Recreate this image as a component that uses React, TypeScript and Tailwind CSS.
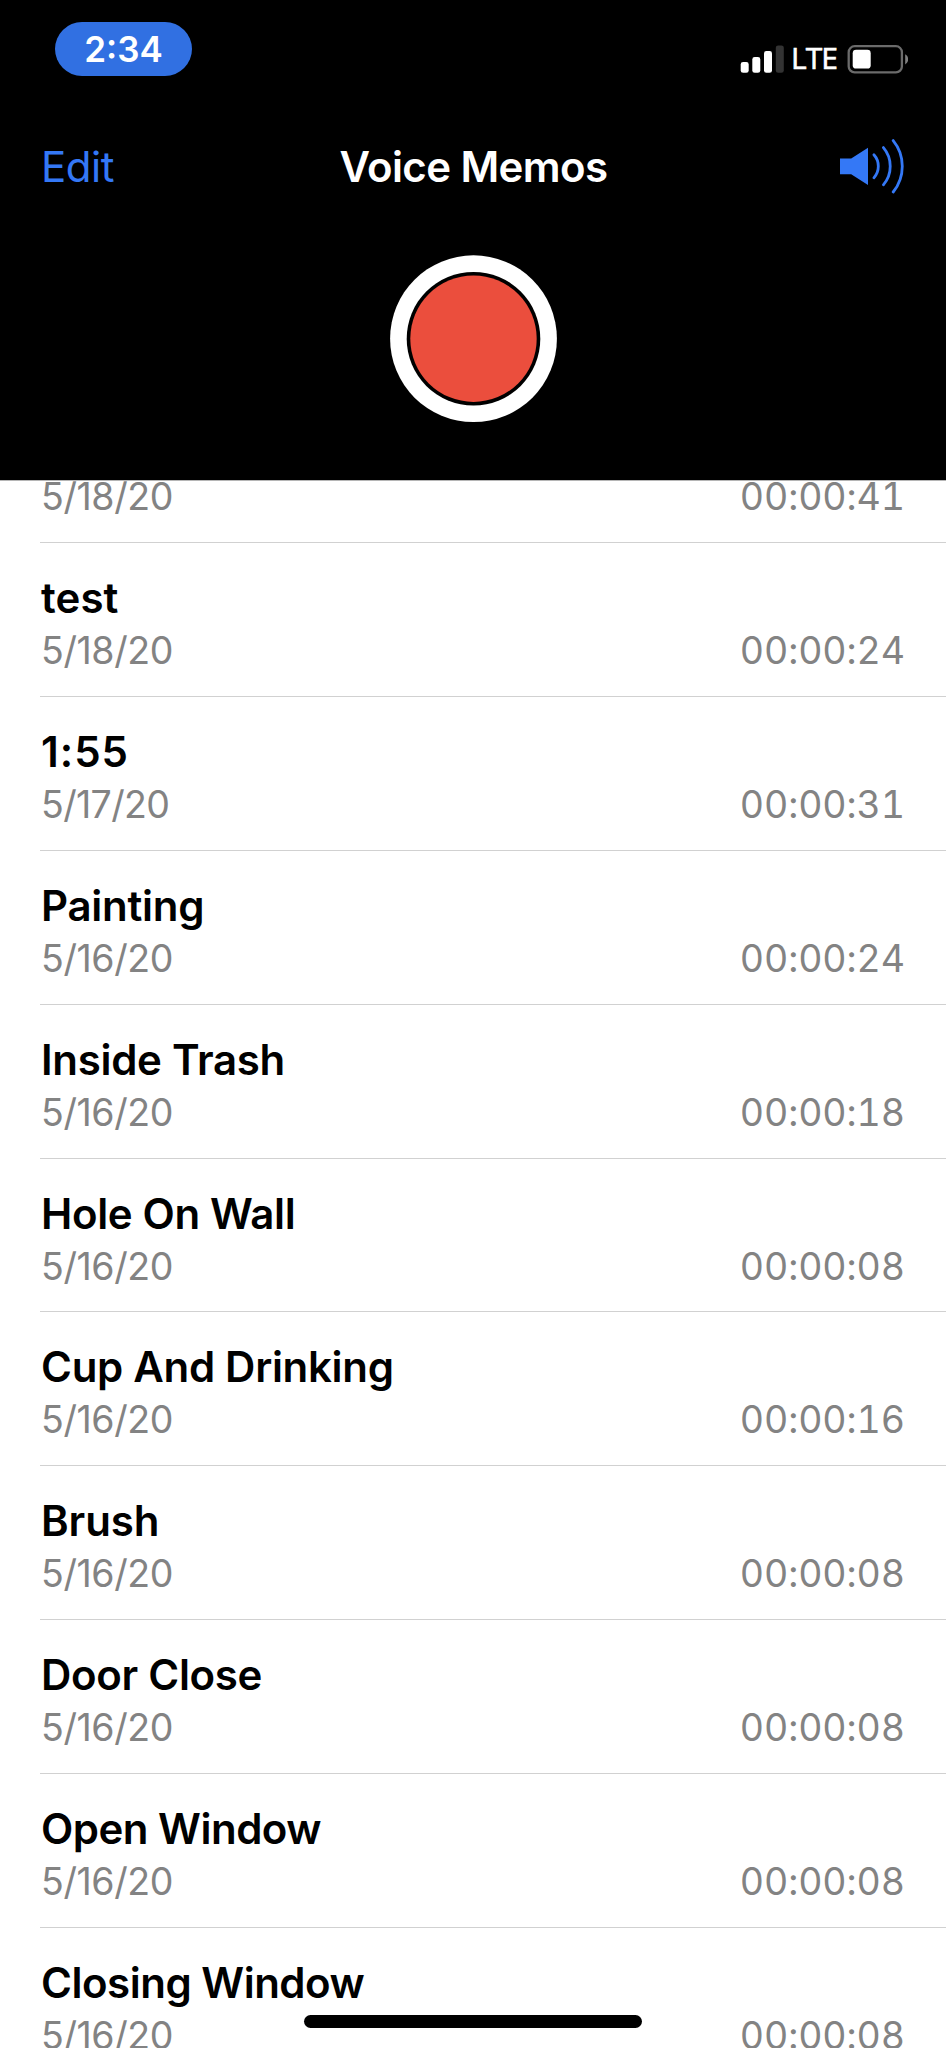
import React from 'react';

interface Memo {
  title?: string;
  date: string;
  length: string;
  tracking?: string;
}

const memos: Memo[] = [
  { date: '5/18/20', length: '00:00:41' },
  { title: 'test', date: '5/18/20', length: '00:00:24', tracking: 'tracking-[0.1px]' },
  { title: '1:55', date: '5/17/20', length: '00:00:31', tracking: 'tracking-[1px]' },
  { title: 'Painting', date: '5/16/20', length: '00:00:24', tracking: 'tracking-[-0.25px]' },
  { title: 'Inside Trash', date: '5/16/20', length: '00:00:18', tracking: 'tracking-[-0.3px]' },
  { title: 'Hole On Wall', date: '5/16/20', length: '00:00:08', tracking: 'tracking-[-0.35px]' },
  { title: 'Cup And Drinking', date: '5/16/20', length: '00:00:16', tracking: 'tracking-[-0.3px]' },
  { title: 'Brush', date: '5/16/20', length: '00:00:08', tracking: 'tracking-[-0.1px]' },
  { title: 'Door Close', date: '5/16/20', length: '00:00:08', tracking: 'tracking-[-0.3px]' },
  { title: 'Open Window', date: '5/16/20', length: '00:00:08', tracking: 'tracking-[-0.5px]' },
  { title: 'Closing Window', date: '5/16/20', length: '00:00:08', tracking: 'tracking-[-0.48px]' },
];

const SignalIcon = () => (
  <svg width="44" height="28" viewBox="0 0 44 28" fill="#fff">
    <rect x="0.7" y="17" width="8" height="10.8" rx="2.4" />
    <rect x="12.3" y="12" width="8" height="15.8" rx="2.4" />
    <rect x="24" y="6" width="8" height="21.8" rx="2.4" />
    <rect x="35.8" y="0.4" width="8" height="27.4" rx="2.4" fill="#333" />
  </svg>
);

const BatteryIcon = () => (
  <svg width="62" height="29" viewBox="0 0 62 29">
    <rect x="2.7" y="1.2" width="53.2" height="26.2" rx="6" fill="none" stroke="#6b6b6b" strokeWidth="2.3" />
    <rect x="6.7" y="4.8" width="18" height="18.8" rx="3.4" fill="#fff" />
    <path d="M59.2 9.2 C63.2 11.2 63.2 17.4 59.2 19.4 Z" fill="#808080" />
  </svg>
);

const SpeakerIcon = () => (
  <svg width="66" height="56" viewBox="0 0 66 56">
    <path d="M0 19.5 H11.2 L28 8.8 V46 L11.2 35.3 H0 Z" fill="#3478f6" />
    <g fill="none" stroke="#3478f6" strokeWidth="2.8" strokeLinecap="round">
      <path d="M33.9 15.8 C39.8 22.4 39.8 32 33.9 38.8" />
      <path d="M43.4 8.6 C52.5 19.3 52.5 35 43.4 45.8" />
      <path d="M53.2 1.6 C65.3 16.4 65.3 38 53.2 53" />
    </g>
  </svg>
);

const RecordIcon = () => (
  <svg width="168" height="168" viewBox="0 0 168 168">
    <circle cx="84.5" cy="83.7" r="83.4" fill="#fff" />
    <circle cx="84.5" cy="83.7" r="66.8" fill="#000" />
    <circle cx="84.5" cy="83.7" r="63.2" fill="#eb4e3d" />
  </svg>
);

const MemoRow: React.FC<{ memo: Memo }> = ({ memo }) => (
  <li className="ml-[40px] h-[153.88px] border-b border-[#d1d1d1] pt-[30px] pr-[41px] pl-px">
    <div className={`h-[50px] text-[42px] leading-[50px] font-semibold ${memo.tracking ?? ''}`}>{memo.title}</div>
    <div className="flex justify-between text-[37.5px] leading-[55px] text-[#838383]">
      <span className={memo.date === '5/17/20' ? 'tracking-[-0.65px]' : 'tracking-[-0.4px]'}>{memo.date}</span>
      <span className="tracking-[-0.1px] tabular-nums">{memo.length}</span>
    </div>
  </li>
);

const App: React.FC = () => {
  return (
    <div className="relative flex h-[2048px] w-[946px] flex-col overflow-hidden bg-white font-['Inter',sans-serif] text-black">
      <header className="h-[480px] shrink-0 bg-black text-white">
        {/* Status bar */}
        <div className="flex h-[120px] items-start justify-between pt-[22px] pr-[38px] pl-[55px]">
          <div className="flex h-[54px] w-[137px] items-center justify-center rounded-full bg-[#3170e2] text-[35px] font-semibold">
            2:34
          </div>
          <div className="mt-[22px] flex items-center">
            <SignalIcon />
            <span className="w-[62px] pb-[2px] pl-[7px] font-['Open_Sans',sans-serif] text-[30px] leading-[28px] font-medium tracking-[-1px] [-webkit-text-stroke:0.6px_white]">
              LTE
            </span>
            <BatteryIcon />
          </div>
        </div>

        {/* Title bar */}
        <div className="grid h-[94px] grid-cols-3 items-center pr-[40px] pl-[41px]">
          <button className="text-left text-[42px] leading-[50px] tracking-[-0.5px] text-[#3478f6]">Edit</button>
          <h1 className="text-center text-[42px] leading-[50px] font-semibold tracking-[-0.6px] whitespace-nowrap">
            Voice Memos
          </h1>
          <button className="flex justify-end">
            <SpeakerIcon />
          </button>
        </div>

        {/* Record button */}
        <div className="flex justify-center pt-[41px]">
          <button>
            <RecordIcon />
          </button>
        </div>
      </header>

      <main className="flex-1 overflow-hidden border-t border-[#b5b5b5]">
        <ul className="-mt-[91.8px]">
          {memos.map((memo, index) => (
            <MemoRow key={index} memo={memo} />
          ))}
        </ul>
      </main>

      {/* Home indicator */}
      <div className="absolute bottom-[20px] left-[304px] h-[13px] w-[338px] rounded-full bg-black" />
    </div>
  );
};

export default App;
